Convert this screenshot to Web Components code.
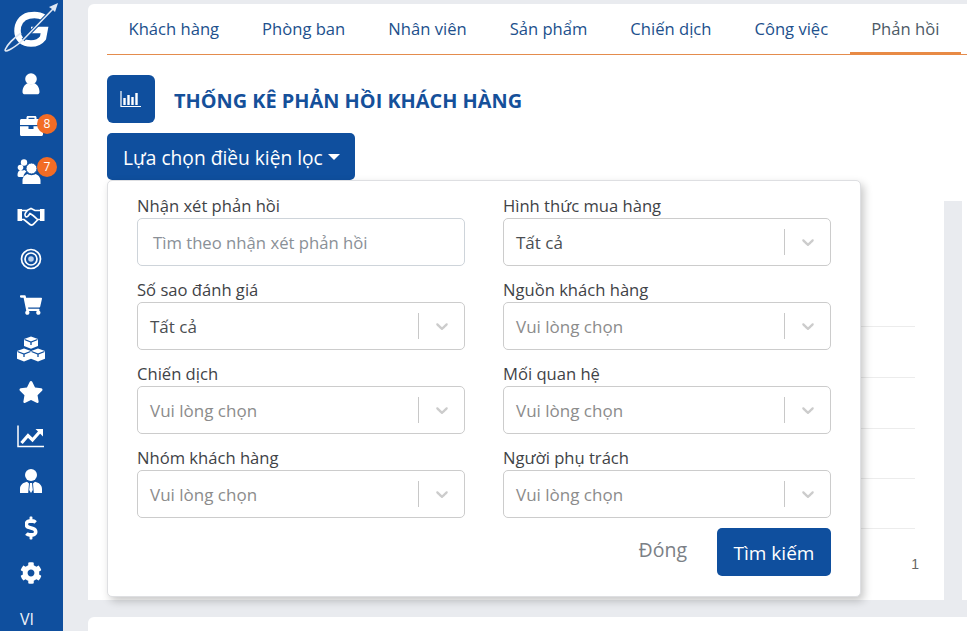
<!DOCTYPE html>
<html lang="vi">
<head>
<meta charset="utf-8">
<title>Thống kê phản hồi khách hàng</title>
<style>
  html,body{margin:0;height:100%;overflow:hidden}
  body{background:#e9ebef;font-family:"Open Sans","Noto Sans",sans-serif;font-size:16px;display:flex;width:967px;height:631px}
</style>
</head>
<body>
<template id="t-sidebar">
  <style>
    :host{display:flex;flex-direction:column;align-items:center;flex:none;width:63px;height:631px;background:#0f4f9e;color:#fff;overflow:visible}
    .logo{display:block;width:63px;height:62px;margin-bottom:8px}
    .lang{font-size:16px;line-height:16px;margin-top:24px;margin-right:9px;color:#eef3fa}
  </style>
  <svg class="logo" viewBox="0 0 63 62">
    <path d="M44 17.500 C40 15 34 14.500 29 15.500 C21 17.500 17.500 24 17.500 31 C17.500 39 23 43.500 31 43.500 C36 43.500 40 42 43 38 L44.500 30 L31 30" fill="none" stroke="#fff" stroke-width="6.500"/>
    <path d="M53 9 L23 40" fill="none" stroke="#0f4f9e" stroke-width="3.600"/>
    <path d="M53 9 L23 40 C13 49 3 54 5.500 49 C8 44 14 38 21 33" fill="none" stroke="#dfe8f4" stroke-width="1.600"/>
    <path d="M58 3 L55 12 L52 9 L49 7 Z" fill="#dfe8f4"/>
  </svg>
  <slot></slot>
  <div class="lang">VI</div>
</template>

<template id="t-nav">
  <style>
    :host{display:block;position:relative;width:28px;height:28px;margin-top:var(--t,0);margin-right:1px}
    ::slotted(svg){display:block;width:28px;height:28px;fill:#fff}
    .badge{position:absolute;left:20px;top:3px;width:20px;height:20px;border-radius:50%;background:#f26c25;color:#fff;font-size:12px;line-height:20px;text-align:center}
  </style>
  <slot></slot>
  <span class="badge" hidden></span>
</template>

<template id="t-tabs">
  <style>
    :host{display:flex;height:50px;border-bottom:1px solid #e48c4d;box-sizing:content-box;color:#21508c}
  </style>
  <slot></slot>
</template>

<template id="t-tab">
  <style>
    :host{display:block;box-sizing:border-box;height:51px;padding:0 21.500px;line-height:50px;font-size:16.600px;white-space:nowrap}
    :host([active]){color:#4d5a66;border-bottom:3px solid #e88a45}
  </style>
  <slot></slot>
</template>

<template id="t-title">
  <style>
    :host{display:flex;align-items:center;gap:19px;margin-top:20px;height:48px}
    .ic{width:48px;height:48px;background:#0f4f9e;border-radius:6px;display:flex;align-items:center;justify-content:center}
    h1{margin:0;padding-top:4px;font-size:19.900px;line-height:28px;font-weight:700;color:#15509a;white-space:nowrap}
  </style>
  <div class="ic">
    <svg width="22" height="18" viewBox="0 0 22 18" fill="none" stroke="#fff">
      <path d="M1 1 V16.500 H21" stroke-width="1.200"/>
      <path d="M4.500 8 V15 M8.500 5 V15 M12.500 7 V15 M16.500 3 V15" stroke-width="2.400"/>
    </svg>
  </div>
  <h1><slot></slot></h1>
</template>

<template id="t-filter">
  <style>
    :host{display:block;position:relative;margin-top:10px;height:47px}
    .open{display:flex;align-items:center;gap:5px;box-sizing:border-box;height:47px;width:248px;padding:2px 0 0 16px;border:0;border-radius:5px;background:#0f4f9e;color:#fff;font:inherit;font-size:19.200px;white-space:nowrap}
    .caret{width:0;height:0;border-left:6.500px solid transparent;border-right:6.500px solid transparent;border-top:6.500px solid #fff;margin-top:-2px}
    .panel{position:absolute;left:0;top:47px;z-index:5;box-sizing:border-box;width:754px;height:417px;background:#fff;border:1px solid #dedfe2;border-radius:5px;box-shadow:3px 4px 8px rgba(0,0,0,.22);padding:13px 29px 0}
    .grid{display:grid;grid-template-columns:328px 328px;column-gap:38px;row-gap:12px}
    .foot{display:flex;justify-content:flex-end;align-items:center;margin-top:10px;height:48px}
    .close{color:#7b8086;font-size:19.500px;margin-right:30px;position:relative;top:-3px}
    .go{display:block;box-sizing:border-box;height:48px;width:114px;border:0;border-radius:5px;background:#0f4f9e;color:#fff;font:inherit;font-size:19px;padding:2px 0 0;text-align:center}
  </style>
  <button class="open">Lựa chọn điều kiện lọc<span class="caret"></span></button>
  <div class="panel">
    <div class="grid"><slot></slot></div>
    <div class="foot"><span class="close">Đóng</span><button class="go">Tìm kiếm</button></div>
  </div>
</template>

<template id="t-field">
  <style>
    :host{display:block;color:#3f4347}
    label{display:block;height:24px;line-height:24px;font-size:16.600px;white-space:nowrap}
  </style>
  <label></label>
  <slot></slot>
</template>

<template id="t-input">
  <style>
    :host{display:flex;align-items:center;box-sizing:border-box;height:48px;border:1px solid #ced4da;border-radius:5px;padding:1px 0 0 15px;color:#8a9097;font-size:16.700px;white-space:nowrap;background:#fff}
  </style>
  <slot></slot>
</template>

<template id="t-select">
  <style>
    :host{display:flex;align-items:center;box-sizing:border-box;height:48px;border:1px solid #cccccc;border-radius:5px;background:#fff;font-size:17px;white-space:nowrap;color:#4a4e52}
    :host([placeholder]){color:#8c8c8c}
    .v{flex:1;padding:1px 0 0 12px}
    .sep{width:1px;height:26px;background:#c8c8c8;flex:none}
    svg{flex:none;width:20px;height:20px;fill:#cccccc;padding:0 12.500px 0 13px}
  </style>
  <span class="v"><slot></slot></span>
  <span class="sep"></span>
  <svg viewBox="0 0 20 20"><path d="M4.516 7.548c0.436-0.446 1.043-0.481 1.576 0l3.908 3.747 3.908-3.747c0.533-0.481 1.141-0.446 1.574 0 0.436 0.445 0.408 1.197 0 1.615-0.406 0.418-4.695 4.502-4.695 4.502-0.217 0.223-0.502 0.335-0.787 0.335s-0.57-0.112-0.789-0.335c0 0-4.287-4.084-4.695-4.502s-0.436-1.17 0-1.615z"/></svg>
</template>

<template id="t-chart">
  <style>
    :host{display:flex;margin-top:21px;height:399px}
    .plot{flex:none;width:837px;height:399px;background:#fff;display:flex;flex-direction:column;align-items:flex-end}
    svg{display:block;width:837px;height:340px;flex:none}
    .tick{font:14px "Liberation Sans",sans-serif;color:#666;margin-right:25px;margin-top:16px;line-height:14px}
    .gap{flex:none;width:18px;background:#e9ebef}
    .rest{flex:1;background:#fff}
  </style>
  <div class="plot">
    <svg viewBox="0 0 837 340" fill="none" stroke="#ececec" stroke-width="1">
      <path d="M400 125.500H808M400 176.500H808M400 227.500H808M400 277.500H808M400 327.500H808"/>
    </svg>
    <span class="tick">1</span>
  </div>
  <div class="gap"></div>
  <div class="rest"></div>
</template>

<template id="t-main">
  <style>
    :host{display:flex;flex-direction:column;flex:none;width:904px;margin-left:25px;padding-top:4px}
    .card{background:#fff;border-radius:6px 0 0 0;height:596px;padding-left:19px;box-sizing:border-box;flex:none}
    .next{background:#fff;border-radius:6px 0 0 0;margin-top:17px;height:14px;flex:none}
  </style>
  <div class="card"><slot></slot></div>
  <div class="next"></div>
</template>

<app-sidebar>
  <nav-item style="--t:0px">
    <svg viewBox="0 0 28 28"><circle cx="14" cy="9" r="5.800"/><path d="M5.500 22c0-5 2.500-7.600 5-8.800 2 1.500 5 1.500 7 0 2.500 1.200 5 3.800 5 8.800 0 1.500-1 2.300-2.500 2.300H8c-1.500 0-2.500-.8-2.500-2.300z"/></svg>
  </nav-item>
  <nav-item style="--t:13px" badge="8">
    <svg viewBox="0 0 28 28"><path fill-rule="evenodd" d="M9.500 8V6.500C9.500 5.600 10.100 5 11 5h7c.9 0 1.500.6 1.500 1.500V8h5c.8 0 1.500.7 1.500 1.500v4.500H3V9.500C3 8.700 3.700 8 4.500 8zM11.500 8h6V6.800h-6z"/><path d="M3 15.300h8.500V18h5v-2.700H26V23.500c0 .8-.7 1.500-1.500 1.500h-20C3.700 25 3 24.300 3 23.500z"/></svg>
  </nav-item>
  <nav-item style="--t:19px" badge="7" top="-1px">
    <svg viewBox="0 0 28 28"><circle cx="7" cy="4.500" r="3.200"/><circle cx="3.500" cy="9.500" r="2.800"/><path d="M.5 17c0-3 1.500-4.500 3-5 1 .6 3 .6 4 0l2 1.500c-2 1.500-3 3-3 5.500H2c-1 0-1.500-1-1.500-2z"/><circle cx="14.500" cy="10.500" r="5.400" stroke="#0f4f9e" stroke-width=".8"/><path d="M5.500 26v-3.500c0-3.500 2.500-5.500 4.800-6.500 2 1.500 6.400 1.500 8.400 0 2.300 1 4.800 3 4.800 6.500V26z"/></svg>
  </nav-item>
  <nav-item style="--t:16px">
    <svg viewBox="0 0 28 28" style="overflow:visible"><path d="M.5 7h4.500v12H.5zM23 7h4.500v12H23z"/><path d="M5 8.500h5l4-2 4 2h5M5 17.500h2l6 5c1 .8 2 .8 3 0l5-5h2M10.500 8.500c-2 2-3.500 4.500-2 6 1.500 1 3-.5 4.500-3 2 1 5 3.500 7.500 6" fill="none" stroke="#fff" stroke-width="1.700"/></svg>
  </nav-item>
  <nav-item style="--t:15px">
    <svg viewBox="0 0 28 28" style="fill:none;stroke:#fff"><circle cx="14" cy="14" r="9.500" stroke-width="1.700"/><circle cx="14" cy="14" r="6" stroke-width="1.700"/><circle cx="14" cy="14" r="2.800" fill="#bcd0ea" stroke="none"/></svg>
  </nav-item>
  <nav-item style="--t:18px">
    <svg viewBox="0 0 576 512" style="padding:4px 3px;box-sizing:border-box"><path d="M528.12 301.319l47.273-208C578.806 78.301 567.391 64 551.99 64H159.208l-9.166-44.81C147.758 8.021 137.93 0 126.529 0H24C10.745 0 0 10.745 0 24v16c0 13.255 10.745 24 24 24h69.883l70.248 343.435C147.325 417.1 136 435.222 136 456c0 30.928 25.072 56 56 56s56-25.072 56-56c0-15.674-6.447-29.835-16.824-40h209.647C430.447 426.165 424 440.326 424 456c0 30.928 25.072 56 56 56s56-25.072 56-56c0-22.172-12.888-41.332-31.579-50.405l5.517-24.276c3.413-15.018-8.002-29.319-23.403-29.319H218.117l-6.545-32h293.145c11.206 0 20.92-7.754 23.403-18.681z"/></svg>
  </nav-item>
  <nav-item style="--t:16px">
    <svg viewBox="0 0 28 28" style="overflow:visible"><path d="M14 1.500l7 2.600v7L14 13.700l-7-2.600v-7z"/><path d="M7 13.500l7 2.600v7.700L7 26.500 0 23.800v-7.700z"/><path d="M21 13.500l7 2.600v7.700l-7 2.700-7-2.700v-7.700z"/><path d="M7.500 4.500L14 7l6.500-2.500M.5 16.500l6.500 2.500 6.500-2.500M14.500 16.500l6.500 2.500 6.500-2.500M14 7.500v2.500M7 19.500v2.500M21 19.500v2.500M14 14v2" fill="none" stroke="#0f4f9e" stroke-width="1.300"/></svg>
  </nav-item>
  <nav-item style="--t:15px">
    <svg viewBox="0 0 576 512" style="padding:3px 1px;box-sizing:border-box"><path d="M259.3 17.8L194 150.2 47.9 171.5c-26.2 3.8-36.7 36.1-17.7 54.6l105.700 103-25 145.500c-4.500 26.300 23.200 46 46.400 33.700L288 439.600l130.700 68.700c23.200 12.200 50.900-7.400 46.400-33.700l-25-145.500 105.700-103c19-18.500 8.500-50.800-17.700-54.600L382 150.200 316.700 17.800c-11.700-23.600-45.600-23.900-57.400 0z"/></svg>
  </nav-item>
  <nav-item style="--t:16px">
    <svg viewBox="0 0 28 28" style="fill:none;stroke:#fff"><path d="M1 3.500V24.500H27" stroke-width="1.500"/><path d="M4.500 21L11 13.500l4.500 4.500L23 9.500" stroke-width="3.200"/><path d="M18.500 7H26V14.500z" fill="#fff" stroke="none"/></svg>
  </nav-item>
  <nav-item style="--t:17px">
    <svg viewBox="0 0 28 28"><circle cx="14" cy="8" r="6"/><path d="M3 26v-4c0-4 3-6.500 7-7.300l2 1.800-.8 9.500zM25 26v-4c0-4-3-6.500-7-7.300l-2 1.800.8 9.500z"/><path d="M13 16h2l.8 7-1.800 3-1.800-3z"/></svg>
  </nav-item>
  <nav-item style="--t:19px">
    <svg viewBox="0 0 288 512" style="padding:1px 7.500px;box-sizing:border-box"><path d="M209.2 233.4l-108-31.600C88.700 198.200 80 186.500 80 173.500c0-16.300 13.200-29.500 29.500-29.500h66.300c12.200 0 24.200 3.700 34.200 10.500 6.100 4.100 14.300 3.100 19.500-2l34.800-34c7.100-6.900 6.100-18.400-1.800-24.500C238 74.800 207.400 64.100 176 64V16c0-8.800-7.200-16-16-16h-32c-8.800 0-16 7.200-16 16v48h-2.500C45.800 64-5.400 118.700.5 183.600c4.200 46.100 39.400 83.600 83.800 96.600l102.500 30c12.500 3.700 21.200 15.300 21.200 28.300 0 16.300-13.200 29.500-29.500 29.500h-66.300C100 368 88 364.300 78 357.500c-6.100-4.100-14.300-3.100-19.500 2l-34.800 34c-7.100 6.900-6.100 18.400 1.800 24.500 24.500 19.200 55.100 29.900 86.500 30v48c0 8.800 7.200 16 16 16h32c8.800 0 16-7.200 16-16v-48.200c46.600-.9 90.300-28.600 105.700-72.700 21.500-61.600-14.600-124.800-72.500-141.700z"/></svg>
  </nav-item>
  <nav-item style="--t:17px">
    <svg viewBox="0 0 512 512" style="padding:3px;box-sizing:border-box"><path d="M487.4 315.7l-42.6-24.6c4.300-23.200 4.300-47 0-70.200l42.600-24.600c4.900-2.800 7.100-8.600 5.500-14-11.100-35.600-30-67.800-54.700-94.600-3.800-4.100-10-5.100-14.800-2.300L380.800 110c-17.900-15.400-38.500-27.300-60.800-35.100V25.800c0-5.600-3.900-10.500-9.400-11.700-36.700-8.200-74.300-7.800-109.200 0-5.500 1.200-9.400 6.100-9.400 11.700V75c-22.200 7.900-42.800 19.800-60.800 35.100L88.700 85.500c-4.900-2.800-11-1.900-14.800 2.300-24.700 26.700-43.600 58.900-54.700 94.600-1.700 5.400.6 11.200 5.500 14L67.300 221c-4.300 23.200-4.300 47 0 70.200l-42.600 24.600c-4.900 2.800-7.100 8.600-5.500 14 11.100 35.600 30 67.800 54.700 94.600 3.800 4.100 10 5.100 14.800 2.300l42.600-24.600c17.900 15.400 38.500 27.300 60.800 35.100v49.200c0 5.600 3.900 10.500 9.400 11.700 36.700 8.200 74.300 7.800 109.200 0 5.500-1.200 9.400-6.100 9.400-11.700v-49.200c22.200-7.900 42.800-19.800 60.800-35.100l42.600 24.600c4.900 2.800 11 1.900 14.800-2.300 24.700-26.700 43.600-58.900 54.700-94.600 1.500-5.500-.7-11.300-5.600-14.100zM256 336c-44.100 0-80-35.900-80-80s35.900-80 80-80 80 35.900 80 80-35.900 80-80 80z"/></svg>
  </nav-item>
</app-sidebar>

<main-area>
  <tab-bar>
    <tab-item>Khách hàng</tab-item>
    <tab-item>Phòng ban</tab-item>
    <tab-item>Nhân viên</tab-item>
    <tab-item>Sản phẩm</tab-item>
    <tab-item>Chiến dịch</tab-item>
    <tab-item>Công việc</tab-item>
    <tab-item active>Phản hồi</tab-item>
  </tab-bar>
  <page-title>THỐNG KÊ PHẢN HỒI KHÁCH HÀNG</page-title>
  <filter-panel>
    <form-field label="Nhận xét phản hồi"><text-box>Tìm theo nhận xét phản hồi</text-box></form-field>
    <form-field label="Hình thức mua hàng"><select-box>Tất cả</select-box></form-field>
    <form-field label="Số sao đánh giá"><select-box>Tất cả</select-box></form-field>
    <form-field label="Nguồn khách hàng"><select-box placeholder>Vui lòng chọn</select-box></form-field>
    <form-field label="Chiến dịch"><select-box placeholder>Vui lòng chọn</select-box></form-field>
    <form-field label="Mối quan hệ"><select-box placeholder>Vui lòng chọn</select-box></form-field>
    <form-field label="Nhóm khách hàng"><select-box placeholder>Vui lòng chọn</select-box></form-field>
    <form-field label="Người phụ trách"><select-box placeholder>Vui lòng chọn</select-box></form-field>
  </filter-panel>
  <chart-panel></chart-panel>
</main-area>

<script>
  const reg = (tag, tpl, init) => customElements.define(tag, class extends HTMLElement {
    constructor(){
      super();
      const root = this.attachShadow({mode:'open'});
      root.appendChild(document.getElementById(tpl).content.cloneNode(true));
      if (init) init(this, root);
    }
  });
  reg('app-sidebar','t-sidebar');
  reg('nav-item','t-nav',(el,root)=>{
    const b = root.querySelector('.badge');
    if (el.hasAttribute('badge')) { b.hidden = false; b.textContent = el.getAttribute('badge'); if (el.hasAttribute('top')) b.style.top = el.getAttribute('top'); }
    else b.remove();
  });
  reg('main-area','t-main');
  reg('tab-bar','t-tabs');
  reg('tab-item','t-tab');
  reg('page-title','t-title');
  reg('filter-panel','t-filter');
  reg('form-field','t-field',(el,root)=>{ root.querySelector('label').textContent = el.getAttribute('label'); });
  reg('text-box','t-input');
  reg('select-box','t-select');
  reg('chart-panel','t-chart');
</script>
</body>
</html>
